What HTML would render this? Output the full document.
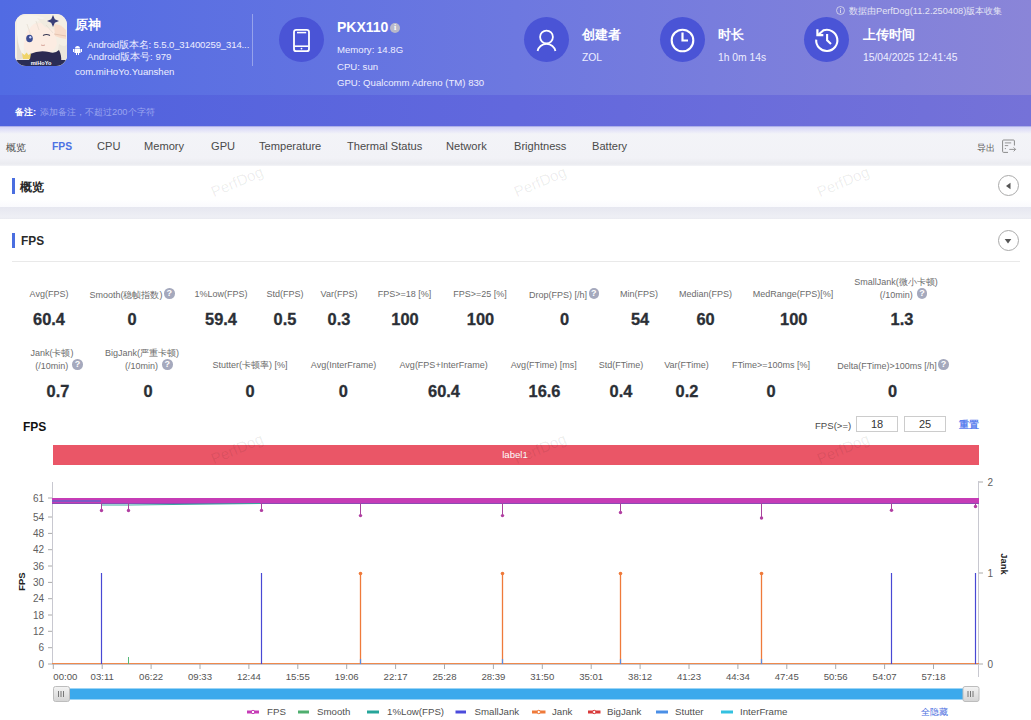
<!DOCTYPE html>
<html><head><meta charset="utf-8">
<style>
*{margin:0;padding:0;box-sizing:border-box}
html,body{width:1031px;height:720px;overflow:hidden;background:#fff;font-family:"Liberation Sans",sans-serif;color:#333}
.abs{position:absolute;white-space:nowrap}
#hdr{position:absolute;left:0;top:0;width:1031px;height:95px;background:linear-gradient(90deg,#516be3 0%,#6d78e0 50%,#8a85d8 100%)}
#band{position:absolute;left:0;top:95px;width:1031px;height:31px;background:linear-gradient(90deg,#4e62de 0%,#6268dd 50%,#7572d8 100%)}
#nav{position:absolute;left:0;top:126px;width:1031px;height:40px;background:linear-gradient(180deg,#f3f4f8 0,#f2f2f7 80%,#eaebf0 95%,#f4f4f8 100%)}
#gap{position:absolute;left:0;top:207px;width:1031px;height:12px;background:linear-gradient(180deg,#e6e7f0,#eeeff5 85%,#e9eaf0)}
.w{color:#fff}
.circ{position:absolute;width:45px;height:45px;border-radius:50%;background:#4a54d6}
.ht{font-size:13px;font-weight:bold;color:#fff}
.hs{font-size:9.6px;color:#eef}
.hv{font-size:10.3px;color:#eef}
.nv{font-size:11.1px;color:#4a4a4a;top:140px}
.lbl{font-size:9px;color:#6b6b6b;text-align:center;line-height:12px}
.val{font-size:16.4px;font-weight:bold;color:#2b2f36;-webkit-text-stroke:.3px #2b2f36;text-align:center;line-height:20px}
.q{display:inline-block;width:10px;height:10px;border-radius:50%;background:#a5a9bd;color:#fff;font-size:9px;line-height:10px;text-align:center;font-weight:bold;vertical-align:2px;margin-left:1.5px;width:10.5px;height:10.5px}
.wm{position:absolute;font-size:14px;color:#efefef;transform:rotate(-18deg)}
.yl{font-size:10px;color:#555;text-align:right;width:30px}
.xl{font-size:10px;color:#555}
.lg{font-size:10px;color:#333;top:706px}
</style></head><body>
<div id="hdr"></div>
<div id="band"></div>
<div id="nav"></div>
<div id="gap"></div>
<div class="abs" style="left:0;top:126px;width:1031px;height:1px;background:rgba(90,95,215,.45)"></div>
<div class="abs" style="left:0;top:127px;width:1031px;height:7px;background:linear-gradient(180deg,#d6d6f8,rgba(243,244,248,0))"></div>

<!-- app icon -->
<svg class="abs" style="left:15px;top:14px" width="52" height="52" viewBox="0 0 52 52">
<defs><clipPath id="ic"><rect x="0" y="0" width="52" height="52" rx="11"/></clipPath></defs>
<g clip-path="url(#ic)">
<rect width="52" height="52" fill="#f6f1e8"/>
<path d="M0 0h52v52H0z" fill="#f4eee4"/>
<path d="M7 30 Q5 16 16 11 Q30 6 39 14 L42 30 Q39 40 26 41 Q11 41 7 30z" fill="#fcece2"/>
<path d="M2 4 Q14 -2 30 4 Q18 8 12 18 Q8 26 9 40 L2 46z" fill="#f7f3ec"/>
<path d="M22 4 Q36 6 42 18 Q38 14 30 13 Q26 9 22 4z" fill="#f1ebe0"/>
<path d="M12 10 L16 22 M21 7 L24 16 M31 11 L38 19" stroke="#e0d8cc" stroke-width=".6" fill="none"/><path d="M2 20 Q3 36 10 44 L2 46z" fill="#e4ddd2"/>
<ellipse cx="14.5" cy="24.5" rx="3.3" ry="3.8" fill="#3b4d92"/>
<ellipse cx="15.3" cy="23.3" rx="1.1" ry="1.2" fill="#cfd8ff"/>
<path d="M28 21.5 Q31.5 19.5 35 21.5" stroke="#3a3a55" stroke-width="1.1" fill="none"/>
<path d="M26 31 Q28 32 30 31" stroke="#c98a80" stroke-width=".7" fill="none"/>
<path d="M39 10 Q46 10 51 16 L51 25 Q44 24 40 22z" fill="#f8dccb"/>
<path d="M39 20 L51 22" stroke="#d9b3a0" stroke-width=".6"/>
<path d="M38 1 L39.8 5.2 L44 7 L39.8 8.8 L38 13 L36.2 8.8 L32 7 L36.2 5.2z" fill="#3a3f78"/>
<path d="M44 30 Q50 34 52 30 L52 52 H40z" fill="#ece6dc"/>
<path d="M15 40 Q24 36 34 38 Q40 40 44 36 Q47 42 46 48 H14z" fill="#2c2a52"/>
<path d="M7 39 L9.5 41 L11.5 38.5 L13.5 41 L16 39.5 L15 45 H8z" fill="#f0d46a"/>
<rect x="0" y="46" width="52" height="6" fill="#2a2d55"/>
<text x="26" y="51" font-size="5.6" font-weight="bold" fill="#fff" text-anchor="middle" font-family="Liberation Sans, sans-serif">miHoYo</text>
</g></svg>
<div class="abs ht" style="left:75px;top:16px">原神</div>
<svg class="abs" style="left:73px;top:45px" width="9" height="10" viewBox="0 0 9 10"><path d="M1.5 4h6v4h-6z M2 3.5a2.5 2.5 0 0 1 5 0z" fill="#fff"/><rect x="0" y="4" width="1" height="3" fill="#fff"/><rect x="8" y="4" width="1" height="3" fill="#fff"/><rect x="3" y="8" width="1" height="2" fill="#fff"/><rect x="5" y="8" width="1" height="2" fill="#fff"/></svg>
<div class="abs hs" style="left:87px;top:39px;letter-spacing:-.15px">Android版本名: 5.5.0_31400259_314...</div>
<div class="abs hs" style="left:87px;top:51px">Android版本号: 979</div>
<div class="abs hs" style="left:75px;top:66px">com.miHoYo.Yuanshen</div>
<div class="abs" style="left:252px;top:14px;width:1px;height:52px;background:rgba(255,255,255,.35)"></div>

<!-- device -->
<div class="circ" style="left:279px;top:17px"></div>
<svg class="abs" style="left:292px;top:28px" width="20" height="25" viewBox="0 0 20 25"><rect x="2" y="1.8" width="15" height="21.4" rx="2.3" fill="none" stroke="#fff" stroke-width="1.8"/><line x1="5" y1="4.6" x2="14.2" y2="4.6" stroke="#fff" stroke-width="1.5"/><line x1="2.5" y1="18.2" x2="16.5" y2="18.2" stroke="#fff" stroke-width="1.6"/><circle cx="9.5" cy="20.6" r=".9" fill="#fff"/></svg>
<div class="abs" style="left:337px;top:19px;font-size:14px;font-weight:bold;color:#fff">PKX110</div>
<div class="abs" style="left:390px;top:23px;width:10px;height:10px;border-radius:50%;background:#b9b9c9;color:#fff;font-size:8px;line-height:10px;text-align:center;font-weight:bold;font-family:'Liberation Serif',serif">i</div>
<div class="abs hs" style="left:337px;top:44px">Memory: 14.8G</div>
<div class="abs hs" style="left:337px;top:61px">CPU: sun</div>
<div class="abs hs" style="left:337px;top:77px">GPU: Qualcomm Adreno (TM) 830</div>

<!-- creator -->
<div class="circ" style="left:524px;top:17px"></div>
<svg class="abs" style="left:534px;top:28px" width="25" height="25" viewBox="0 0 25 25"><circle cx="12.5" cy="9" r="6.4" fill="none" stroke="#fff" stroke-width="1.8"/><path d="M3.6 23a9 8.3 0 0 1 17.8 0" fill="none" stroke="#fff" stroke-width="1.8"/></svg>
<div class="abs ht" style="left:582px;top:26px">创建者</div>
<div class="abs hv" style="left:582px;top:52px">ZOL</div>

<!-- duration -->
<div class="circ" style="left:660px;top:17px"></div>
<svg class="abs" style="left:669px;top:27px" width="27" height="27" viewBox="0 0 27 27"><circle cx="13.5" cy="13.5" r="10.8" fill="none" stroke="#fff" stroke-width="2.1"/><path d="M13.5 5.5v8h5.5" fill="none" stroke="#fff" stroke-width="2.2"/></svg>
<div class="abs ht" style="left:718px;top:26px">时长</div>
<div class="abs hv" style="left:718px;top:52px">1h 0m 14s</div>

<!-- upload -->
<div class="circ" style="left:804px;top:17px"></div>
<svg class="abs" style="left:813px;top:26px" width="28" height="28" viewBox="0 0 28 28"><path d="M3.2 13.6A10.6 10.6 0 1 0 10.6 4.3L5 9" fill="none" stroke="#fff" stroke-width="2.1"/><path d="M4.4 3.2V9.1H10.3" fill="none" stroke="#fff" stroke-width="2.2"/><path d="M14.1 7.9V14.2L18 18" fill="none" stroke="#fff" stroke-width="2.1"/></svg>
<div class="abs ht" style="left:863px;top:26px">上传时间</div>
<div class="abs hv" style="left:863px;top:52px">15/04/2025 12:41:45</div>
<svg class="abs" style="left:836px;top:6px" width="9" height="9" viewBox="0 0 9 9"><circle cx="4.5" cy="4.5" r="4" fill="none" stroke="#dde" stroke-width=".8"/><rect x="4.1" y="3.6" width=".9" height="3.4" fill="#dde"/><rect x="4.1" y="2" width=".9" height=".9" fill="#dde"/></svg>
<div class="abs hs" style="left:849px;top:4.5px;color:#e4e4f4;font-size:9.2px">数据由PerfDog(11.2.250408)版本收集</div>

<!-- remark -->
<div class="abs" style="left:15px;top:106px;font-size:9.3px;font-weight:bold;color:#fff">备注:</div>
<div class="abs" style="left:40px;top:106px;font-size:9.3px;color:#9aa3ee">添加备注，不超过200个字符</div>

<!-- nav -->
<div class="abs nv" style="left:6px;font-size:10px;top:141px">概览</div>
<div class="abs nv" style="left:52px;color:#4d72e3;font-weight:bold;font-size:10.3px;top:141px">FPS</div>
<div class="abs nv" style="left:97px">CPU</div>
<div class="abs nv" style="left:144px">Memory</div>
<div class="abs nv" style="left:211px">GPU</div>
<div class="abs nv" style="left:259px">Temperature</div>
<div class="abs nv" style="left:347px">Thermal Status</div>
<div class="abs nv" style="left:446px">Network</div>
<div class="abs nv" style="left:514px">Brightness</div>
<div class="abs nv" style="left:592px">Battery</div>
<div class="abs" style="left:977px;top:142px;font-size:9.2px;color:#5a5a5a">导出</div>
<svg class="abs" style="left:1001px;top:139px" width="16" height="15" viewBox="0 0 16 15"><path d="M7 13.4H2.6Q1.6 13.4 1.6 12.4V2Q1.6 1 2.6 1H12.4Q13.4 1 13.4 2V6.5" fill="none" stroke="#8a8a8a" stroke-width="1"/><path d="M3.8 3.9H10.2M3.8 6.6H7.2M3.8 9.6H5M8.3 10.4H14.6M12.6 8.4L14.6 10.4L12.6 12.4" fill="none" stroke="#8a8a8a" stroke-width=".9"/></svg>

<!-- sections -->
<div class="abs" style="left:12px;top:178px;width:3px;height:16px;background:#4a6ee0"></div>
<div class="abs" style="left:20px;top:179px;font-size:12.4px;font-weight:bold;color:#2a2a2a">概览</div>
<div class="abs" style="left:0;top:199px;width:1031px;height:8px;background:linear-gradient(180deg,rgba(246,247,252,0),rgba(246,247,252,.6))"></div>
<div class="abs" style="left:998px;top:175px;width:21px;height:21px;border-radius:50%;border:1px solid #aaa"></div>
<svg class="abs" style="left:1004px;top:182px" width="8" height="8" viewBox="0 0 8 8"><path d="M2 4l4.5-3.3v6.6z" fill="#555"/></svg>

<div class="abs" style="left:12px;top:233px;width:3px;height:15px;background:#4a6ee0"></div>
<div class="abs" style="left:20.5px;top:234px;font-size:12.6px;font-weight:bold;color:#2a2a2a;transform:scaleX(.94);transform-origin:0 0">FPS</div>
<div class="abs" style="left:998px;top:230px;width:21px;height:21px;border-radius:50%;border:1px solid #aaa"></div>
<svg class="abs" style="left:1004px;top:237px" width="8" height="8" viewBox="0 0 8 8"><path d="M.7 2h6.6L4 6.5z" fill="#555"/></svg>
<div class="abs" style="left:12px;top:261px;width:1008px;height:1px;background:#e9e9e9"></div>

<!--M-->
<div class="abs lbl" style="left:-21.0px;top:288px;width:140px">Avg(FPS)</div>
<div class="abs val" style="left:-1.0px;top:309px;width:100px">60.4</div>
<div class="abs lbl" style="left:62.0px;top:288px;width:140px">Smooth(稳帧指数)<span class="q">?</span></div>
<div class="abs val" style="left:82.0px;top:309px;width:100px">0</div>
<div class="abs lbl" style="left:151.0px;top:288px;width:140px">1%Low(FPS)</div>
<div class="abs val" style="left:171.0px;top:309px;width:100px">59.4</div>
<div class="abs lbl" style="left:215.0px;top:288px;width:140px">Std(FPS)</div>
<div class="abs val" style="left:235.0px;top:309px;width:100px">0.5</div>
<div class="abs lbl" style="left:269.0px;top:288px;width:140px">Var(FPS)</div>
<div class="abs val" style="left:289.0px;top:309px;width:100px">0.3</div>
<div class="abs lbl" style="left:334.5px;top:288px;width:140px">FPS&gt;=18 [%]</div>
<div class="abs val" style="left:355.0px;top:309px;width:100px">100</div>
<div class="abs lbl" style="left:410.0px;top:288px;width:140px">FPS&gt;=25 [%]</div>
<div class="abs val" style="left:430.5px;top:309px;width:100px">100</div>
<div class="abs lbl" style="left:494.0px;top:288px;width:140px">Drop(FPS) [/h]<span class="q">?</span></div>
<div class="abs val" style="left:514.5px;top:309px;width:100px">0</div>
<div class="abs lbl" style="left:569.0px;top:288px;width:140px">Min(FPS)</div>
<div class="abs val" style="left:590.0px;top:309px;width:100px">54</div>
<div class="abs lbl" style="left:635.5px;top:288px;width:140px">Median(FPS)</div>
<div class="abs val" style="left:655.5px;top:309px;width:100px">60</div>
<div class="abs lbl" style="left:723.0px;top:288px;width:140px">MedRange(FPS)[%]</div>
<div class="abs val" style="left:743.8px;top:309px;width:100px">100</div>
<div class="abs lbl" style="left:826.0px;top:276px;width:140px">SmallJank(微小卡顿)</div>
<div class="abs lbl" style="left:833.5px;top:288px;width:140px">(/10min)&nbsp;<span class="q">?</span></div>
<div class="abs val" style="left:852.0px;top:309px;width:100px">1.3</div>
<div class="abs lbl" style="left:-18.0px;top:347px;width:140px">Jank(卡顿)</div>
<div class="abs lbl" style="left:-11.0px;top:359px;width:140px">(/10min)&nbsp;<span class="q">?</span></div>
<div class="abs val" style="left:8.0px;top:381px;width:100px">0.7</div>
<div class="abs lbl" style="left:72.0px;top:347px;width:140px">BigJank(严重卡顿)</div>
<div class="abs lbl" style="left:78.8px;top:359px;width:140px">(/10min)&nbsp;<span class="q">?</span></div>
<div class="abs val" style="left:98.0px;top:381px;width:100px">0</div>
<div class="abs lbl" style="left:180.0px;top:359px;width:140px">Stutter(卡顿率) [%]</div>
<div class="abs val" style="left:200.0px;top:381px;width:100px">0</div>
<div class="abs lbl" style="left:273.5px;top:359px;width:140px">Avg(InterFrame)</div>
<div class="abs val" style="left:293.4px;top:381px;width:100px">0</div>
<div class="abs lbl" style="left:373.6px;top:359px;width:140px">Avg(FPS+InterFrame)</div>
<div class="abs val" style="left:394.0px;top:381px;width:100px">60.4</div>
<div class="abs lbl" style="left:473.8px;top:359px;width:140px">Avg(FTime) [ms]</div>
<div class="abs val" style="left:494.5px;top:381px;width:100px">16.6</div>
<div class="abs lbl" style="left:551.0px;top:359px;width:140px">Std(FTime)</div>
<div class="abs val" style="left:571.0px;top:381px;width:100px">0.4</div>
<div class="abs lbl" style="left:616.5px;top:359px;width:140px">Var(FTime)</div>
<div class="abs val" style="left:637.0px;top:381px;width:100px">0.2</div>
<div class="abs lbl" style="left:701.0px;top:359px;width:140px">FTime&gt;=100ms [%]</div>
<div class="abs val" style="left:721.0px;top:381px;width:100px">0</div>
<div class="abs lbl" style="left:823.0px;top:359px;width:140px">Delta(FTime)&gt;100ms [/h]<span class="q">?</span></div>
<div class="abs val" style="left:842.6px;top:381px;width:100px">0</div>
<!--/M-->
<!--C-->
<div class="abs" style="left:23px;top:420px;font-size:12px;font-weight:bold;color:#111">FPS</div>
<div class="abs" style="left:815px;top:419.5px;font-size:9.6px;color:#4a4a4a">FPS(&gt;=)</div>
<div class="abs" style="left:856px;top:416px;width:42px;height:16px;border:1px solid #ccc;font-size:11px;color:#333;text-align:center;line-height:14px">18</div>
<div class="abs" style="left:904px;top:416px;width:42px;height:16px;border:1px solid #ccc;font-size:11px;color:#333;text-align:center;line-height:14px">25</div>
<div class="abs" style="left:959px;top:418px;font-size:10px;font-weight:bold;color:#5a80ee">重置</div>
<div class="abs" style="left:197px;top:173px;width:80px;text-align:center;font-size:15px;color:rgba(0,0,0,.075);transform:rotate(-23deg);z-index:5">PerfDog</div>
<div class="abs" style="left:500px;top:173px;width:80px;text-align:center;font-size:15px;color:rgba(0,0,0,.075);transform:rotate(-23deg);z-index:5">PerfDog</div>
<div class="abs" style="left:803px;top:173px;width:80px;text-align:center;font-size:15px;color:rgba(0,0,0,.075);transform:rotate(-23deg);z-index:5">PerfDog</div>
<div class="abs" style="left:197px;top:440px;width:80px;text-align:center;font-size:15px;color:rgba(0,0,0,.075);transform:rotate(-23deg);z-index:5">PerfDog</div>
<div class="abs" style="left:500px;top:440px;width:80px;text-align:center;font-size:15px;color:rgba(0,0,0,.075);transform:rotate(-23deg);z-index:5">PerfDog</div>
<div class="abs" style="left:803px;top:440px;width:80px;text-align:center;font-size:15px;color:rgba(0,0,0,.075);transform:rotate(-23deg);z-index:5">PerfDog</div>
<svg class="abs" style="left:0;top:400px" width="1031" height="320" viewBox="0 400 1031 320" font-family="Liberation Sans, sans-serif"><defs><linearGradient id="hg" x1="0" y1="0" x2="0" y2="1"><stop offset="0" stop-color="#f4f4f4"/><stop offset="1" stop-color="#d4d4d4"/></linearGradient></defs><rect x="53" y="445" width="926" height="20" fill="#ea5667"/><text x="515" y="457.8" font-size="9.6" fill="#fff" text-anchor="middle">label1</text><line x1="52.5" y1="482" x2="52.5" y2="664" stroke="#c8c8d0" stroke-width="1"/><line x1="978.5" y1="481" x2="978.5" y2="677" stroke="#c8c8d0" stroke-width="1"/><line x1="52" y1="664.5" x2="979" y2="664.5" stroke="#c8c8d0" stroke-width="1"/><line x1="48" y1="498.0" x2="52" y2="498.0" stroke="#aaa"/><text x="44" y="501.5" font-size="10" fill="#606060" text-anchor="end">61</text><line x1="48" y1="517.0" x2="52" y2="517.0" stroke="#aaa"/><text x="44" y="520.5" font-size="10" fill="#606060" text-anchor="end">54</text><line x1="48" y1="533.4" x2="52" y2="533.4" stroke="#aaa"/><text x="44" y="536.9" font-size="10" fill="#606060" text-anchor="end">48</text><line x1="48" y1="549.7" x2="52" y2="549.7" stroke="#aaa"/><text x="44" y="553.2" font-size="10" fill="#606060" text-anchor="end">42</text><line x1="48" y1="566.0" x2="52" y2="566.0" stroke="#aaa"/><text x="44" y="569.5" font-size="10" fill="#606060" text-anchor="end">36</text><line x1="48" y1="582.4" x2="52" y2="582.4" stroke="#aaa"/><text x="44" y="585.9" font-size="10" fill="#606060" text-anchor="end">30</text><line x1="48" y1="598.7" x2="52" y2="598.7" stroke="#aaa"/><text x="44" y="602.2" font-size="10" fill="#606060" text-anchor="end">24</text><line x1="48" y1="615.0" x2="52" y2="615.0" stroke="#aaa"/><text x="44" y="618.5" font-size="10" fill="#606060" text-anchor="end">18</text><line x1="48" y1="631.3" x2="52" y2="631.3" stroke="#aaa"/><text x="44" y="634.8" font-size="10" fill="#606060" text-anchor="end">12</text><line x1="48" y1="647.7" x2="52" y2="647.7" stroke="#aaa"/><text x="44" y="651.2" font-size="10" fill="#606060" text-anchor="end">6</text><line x1="48" y1="664.0" x2="52" y2="664.0" stroke="#aaa"/><text x="44" y="667.5" font-size="10" fill="#606060" text-anchor="end">0</text><line x1="979" y1="482" x2="983" y2="482" stroke="#aaa"/><text x="987.5" y="485.5" font-size="10" fill="#606060">2</text><line x1="979" y1="573" x2="983" y2="573" stroke="#aaa"/><text x="987.5" y="576.5" font-size="10" fill="#606060">1</text><line x1="979" y1="664" x2="983" y2="664" stroke="#aaa"/><text x="987.5" y="667.5" font-size="10" fill="#606060">0</text><line x1="53.3" y1="664" x2="53.3" y2="669" stroke="#aaa"/><text x="53.3" y="679.8" font-size="9.6" fill="#555">00:00</text><line x1="102.2" y1="664" x2="102.2" y2="669" stroke="#aaa"/><text x="102.2" y="679.8" font-size="9.6" fill="#555" text-anchor="middle">03:11</text><line x1="151.1" y1="664" x2="151.1" y2="669" stroke="#aaa"/><text x="151.1" y="679.8" font-size="9.6" fill="#555" text-anchor="middle">06:22</text><line x1="200.0" y1="664" x2="200.0" y2="669" stroke="#aaa"/><text x="200.0" y="679.8" font-size="9.6" fill="#555" text-anchor="middle">09:33</text><line x1="248.9" y1="664" x2="248.9" y2="669" stroke="#aaa"/><text x="248.9" y="679.8" font-size="9.6" fill="#555" text-anchor="middle">12:44</text><line x1="297.8" y1="664" x2="297.8" y2="669" stroke="#aaa"/><text x="297.8" y="679.8" font-size="9.6" fill="#555" text-anchor="middle">15:55</text><line x1="346.7" y1="664" x2="346.7" y2="669" stroke="#aaa"/><text x="346.7" y="679.8" font-size="9.6" fill="#555" text-anchor="middle">19:06</text><line x1="395.6" y1="664" x2="395.6" y2="669" stroke="#aaa"/><text x="395.6" y="679.8" font-size="9.6" fill="#555" text-anchor="middle">22:17</text><line x1="444.5" y1="664" x2="444.5" y2="669" stroke="#aaa"/><text x="444.5" y="679.8" font-size="9.6" fill="#555" text-anchor="middle">25:28</text><line x1="493.4" y1="664" x2="493.4" y2="669" stroke="#aaa"/><text x="493.4" y="679.8" font-size="9.6" fill="#555" text-anchor="middle">28:39</text><line x1="542.3" y1="664" x2="542.3" y2="669" stroke="#aaa"/><text x="542.3" y="679.8" font-size="9.6" fill="#555" text-anchor="middle">31:50</text><line x1="591.2" y1="664" x2="591.2" y2="669" stroke="#aaa"/><text x="591.2" y="679.8" font-size="9.6" fill="#555" text-anchor="middle">35:01</text><line x1="640.1" y1="664" x2="640.1" y2="669" stroke="#aaa"/><text x="640.1" y="679.8" font-size="9.6" fill="#555" text-anchor="middle">38:12</text><line x1="689.0" y1="664" x2="689.0" y2="669" stroke="#aaa"/><text x="689.0" y="679.8" font-size="9.6" fill="#555" text-anchor="middle">41:23</text><line x1="737.9" y1="664" x2="737.9" y2="669" stroke="#aaa"/><text x="737.9" y="679.8" font-size="9.6" fill="#555" text-anchor="middle">44:34</text><line x1="786.8" y1="664" x2="786.8" y2="669" stroke="#aaa"/><text x="786.8" y="679.8" font-size="9.6" fill="#555" text-anchor="middle">47:45</text><line x1="835.7" y1="664" x2="835.7" y2="669" stroke="#aaa"/><text x="835.7" y="679.8" font-size="9.6" fill="#555" text-anchor="middle">50:56</text><line x1="884.6" y1="664" x2="884.6" y2="669" stroke="#aaa"/><text x="884.6" y="679.8" font-size="9.6" fill="#555" text-anchor="middle">54:07</text><line x1="933.5" y1="664" x2="933.5" y2="669" stroke="#aaa"/><text x="933.5" y="679.8" font-size="9.6" fill="#555" text-anchor="middle">57:18</text><text transform="translate(25,581.7) rotate(-90)" font-size="9.4" font-weight="bold" fill="#222" text-anchor="middle">FPS</text><text transform="translate(1000.5,564) rotate(90)" font-size="9.4" font-weight="bold" fill="#222" text-anchor="middle">Jank</text><line x1="52" y1="663.5" x2="979" y2="663.5" stroke="#ef8a4c" stroke-width="1.2"/><rect x="52" y="498" width="927" height="6" fill="#c63cb6"/><line x1="52" y1="503.5" x2="979" y2="503.5" stroke="#8050b4" stroke-width="1" opacity=".85"/><line x1="52" y1="501" x2="101" y2="501" stroke="#7d58c4" stroke-width="2"/><polyline points="101.5,505 129,505 260,503.5" fill="none" stroke="#3aa7a0" stroke-width="1"/><line x1="101.5" y1="503" x2="101.5" y2="510.5" stroke="#a8449c" stroke-width="1"/><circle cx="101.5" cy="510.5" r="1.7" fill="#b13fa2"/><line x1="128.5" y1="503" x2="128.5" y2="510.5" stroke="#a8449c" stroke-width="1"/><circle cx="128.5" cy="510.5" r="1.7" fill="#b13fa2"/><line x1="261.5" y1="503" x2="261.5" y2="510.4" stroke="#a8449c" stroke-width="1"/><circle cx="261.5" cy="510.4" r="1.7" fill="#b13fa2"/><line x1="360.5" y1="503" x2="360.5" y2="515.6" stroke="#a8449c" stroke-width="1"/><circle cx="360.5" cy="515.6" r="1.7" fill="#b13fa2"/><line x1="502.5" y1="503" x2="502.5" y2="515.6" stroke="#a8449c" stroke-width="1"/><circle cx="502.5" cy="515.6" r="1.7" fill="#b13fa2"/><line x1="620.5" y1="503" x2="620.5" y2="512.5" stroke="#a8449c" stroke-width="1"/><circle cx="620.5" cy="512.5" r="1.7" fill="#b13fa2"/><line x1="761.5" y1="503" x2="761.5" y2="518" stroke="#a8449c" stroke-width="1"/><circle cx="761.5" cy="518" r="1.7" fill="#b13fa2"/><line x1="891.5" y1="503" x2="891.5" y2="510.2" stroke="#a8449c" stroke-width="1"/><circle cx="891.5" cy="510.2" r="1.7" fill="#b13fa2"/><line x1="975.5" y1="503" x2="975.5" y2="506.5" stroke="#a8449c" stroke-width="1"/><circle cx="975.5" cy="506.5" r="1.7" fill="#b13fa2"/><line x1="101.5" y1="573" x2="101.5" y2="664" stroke="#4848d4" stroke-width="1.2"/><line x1="261.5" y1="573" x2="261.5" y2="664" stroke="#4848d4" stroke-width="1.2"/><line x1="891.5" y1="573" x2="891.5" y2="664" stroke="#4848d4" stroke-width="1.2"/><line x1="975.5" y1="573" x2="975.5" y2="664" stroke="#4848d4" stroke-width="1.2"/><line x1="360.5" y1="573.5" x2="360.5" y2="664" stroke="#ef7a3a" stroke-width="1.3"/><circle cx="360.5" cy="573.5" r="1.8" fill="#ef7a3a"/><line x1="360.5" y1="659" x2="360.5" y2="664" stroke="#5a8de0" stroke-width="1.2"/><line x1="502.5" y1="573.5" x2="502.5" y2="664" stroke="#ef7a3a" stroke-width="1.3"/><circle cx="502.5" cy="573.5" r="1.8" fill="#ef7a3a"/><line x1="502.5" y1="659" x2="502.5" y2="664" stroke="#5a8de0" stroke-width="1.2"/><line x1="620.5" y1="573.5" x2="620.5" y2="664" stroke="#ef7a3a" stroke-width="1.3"/><circle cx="620.5" cy="573.5" r="1.8" fill="#ef7a3a"/><line x1="620.5" y1="659" x2="620.5" y2="664" stroke="#5a8de0" stroke-width="1.2"/><line x1="761.5" y1="573.5" x2="761.5" y2="664" stroke="#ef7a3a" stroke-width="1.3"/><circle cx="761.5" cy="573.5" r="1.8" fill="#ef7a3a"/><line x1="761.5" y1="659" x2="761.5" y2="664" stroke="#5a8de0" stroke-width="1.2"/><line x1="128.5" y1="657" x2="128.5" y2="664" stroke="#55b877" stroke-width="1"/><rect x="60" y="688.5" width="910" height="11" fill="#3ba9ec"/><rect x="53.5" y="686.5" width="16" height="15" rx="2" fill="url(#hg)" stroke="#bdbdbd"/><line x1="58.5" y1="691" x2="58.5" y2="697" stroke="#777" stroke-width="1"/><line x1="61.0" y1="691" x2="61.0" y2="697" stroke="#777" stroke-width="1"/><line x1="63.5" y1="691" x2="63.5" y2="697" stroke="#777" stroke-width="1"/><rect x="963.0" y="686.5" width="16" height="15" rx="2" fill="url(#hg)" stroke="#bdbdbd"/><line x1="968.0" y1="691" x2="968.0" y2="697" stroke="#777" stroke-width="1"/><line x1="970.5" y1="691" x2="970.5" y2="697" stroke="#777" stroke-width="1"/><line x1="973.0" y1="691" x2="973.0" y2="697" stroke="#777" stroke-width="1"/><line x1="247" y1="712" x2="259" y2="712" stroke="#c63cb6" stroke-width="3"/><circle cx="253.0" cy="712" r="1.7" fill="#fff" stroke="#c63cb6" stroke-width="1"/><text x="267" y="715" font-size="9.7" fill="#505050">FPS</text><line x1="298" y1="712" x2="309" y2="712" stroke="#4fae6e" stroke-width="3"/><text x="317" y="715" font-size="9.7" fill="#505050">Smooth</text><line x1="367" y1="712" x2="379" y2="712" stroke="#26a59a" stroke-width="3"/><text x="387" y="715" font-size="9.7" fill="#505050">1%Low(FPS)</text><line x1="455.5" y1="712" x2="466" y2="712" stroke="#4b4bdc" stroke-width="3"/><text x="474.5" y="715" font-size="9.7" fill="#505050">SmallJank</text><line x1="532" y1="712" x2="545.5" y2="712" stroke="#ef7a3a" stroke-width="3"/><circle cx="538.75" cy="712" r="1.7" fill="#fff" stroke="#ef7a3a" stroke-width="1"/><text x="552" y="715" font-size="9.7" fill="#505050">Jank</text><line x1="588" y1="712" x2="600.5" y2="712" stroke="#d93a3a" stroke-width="3"/><circle cx="594.25" cy="712" r="1.7" fill="#fff" stroke="#d93a3a" stroke-width="1"/><text x="607" y="715" font-size="9.7" fill="#505050">BigJank</text><line x1="656" y1="712" x2="668" y2="712" stroke="#4a8fe6" stroke-width="3"/><text x="675" y="715" font-size="9.7" fill="#505050">Stutter</text><line x1="721" y1="712" x2="733" y2="712" stroke="#33c1e0" stroke-width="3"/><text x="740" y="715" font-size="9.7" fill="#505050">InterFrame</text><text x="920.5" y="715" font-size="9" fill="#4a6ee0">全隐藏</text></svg>
<!--/C-->
</body></html>
